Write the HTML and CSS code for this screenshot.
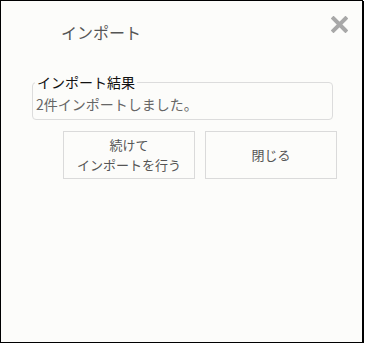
FILE: index.html
```html
<!DOCTYPE html>
<html lang="ja">
<head>
    <meta charset="UTF-8">
    <meta name="viewport" content="width=device-width, initial-scale=1.0">
    <title>インポート</title>
    <link rel="stylesheet" href="styles.css">
</head>
<body>
    <div class="dialog">
        <div class="dialog-header">
            <h2 class="dialog-title">インポート</h2>
            <button class="close-button" aria-label="閉じる">
                <svg width="17" height="17" viewBox="0 0 17 17">
                    <path d="M2.5 2.5 L14.5 14.5 M14.5 2.5 L2.5 14.5" stroke="#a8a8a8" stroke-width="4" stroke-linecap="square" fill="none"/>
                </svg>
            </button>
        </div>

        <fieldset class="result">
            <legend>インポート結果</legend>
            <p class="result-text">2件インポートしました。</p>
        </fieldset>

        <div class="actions">
            <button class="action-button">続けて<br>インポートを行う</button>
            <button class="action-button">閉じる</button>
        </div>
    </div>
</body>
</html>
```

FILE: styles.css
```css
body {
    margin: 0;
    padding: 0;
    font-family: "Noto Sans CJK JP", "Noto Sans", sans-serif;
    background-color: #fff;
}
.dialog {
    position: relative;
    width: 361px;
    height: 341px;
    border: 1px solid #000;
    box-shadow: 1px 1px 0 #000;
    background-color: #fcfcfa;
}
.dialog-header {
    padding: 19px 0 0 60px;
    height: 25px;
}
.dialog-title {
    margin: 0;
    font-size: 16px;
    font-weight: normal;
    line-height: 24px;
    color: #555;
}
.close-button {
    position: absolute;
    top: 15px;
    right: 14px;
    padding: 0;
    border: none;
    background: none;
    cursor: pointer;
    line-height: 0;
}
.result {
    width: 296px;
    margin: 29px 0 0 31px;
    padding: 0 0 5px 3px;
    border: 1px solid #dcdcdc;
    border-radius: 4px;
}
.result legend {
    padding: 0 2px;
    margin-left: -1px;
    font-size: 14px;
    line-height: 16px;
    color: #111;
}
.result-text {
    margin: 4px 0 0;
    font-size: 14px;
    line-height: 20px;
    color: #666;
}
.actions {
    display: flex;
    gap: 10px;
    margin: 11px 0 0 62px;
}
.action-button {
    width: 132px;
    height: 48px;
    padding: 0;
    border: 1px solid #dadada;
    background: transparent;
    font-family: inherit;
    font-size: 13px;
    line-height: 20px;
    color: #555;
    cursor: pointer;
}
```
